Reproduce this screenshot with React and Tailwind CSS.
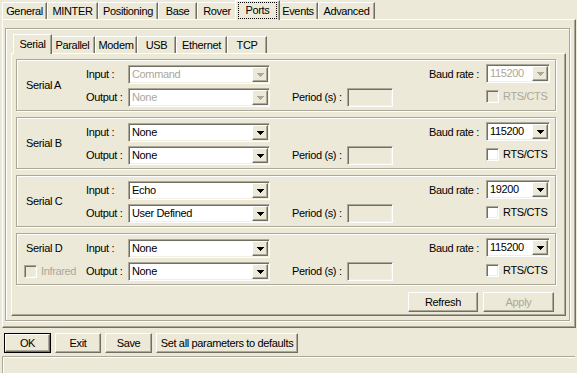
import React from "react";

// classic 3D edges
const raised =
  "bg-[#ECE9D8] border border-t-white border-l-white border-r-[#716F64] border-b-[#716F64] shadow-[inset_-1px_-1px_0_#ACA899]";
const sunken =
  "border border-t-[#ACA899] border-l-[#ACA899] border-r-white border-b-white shadow-[inset_1px_1px_0_#716F64,inset_-1px_-1px_0_#F1EFE2]";

const Arrow = ({ disabled }) => (
  <svg width="7" height="4" viewBox="0 0 7 4" shapeRendering="crispEdges">
    <path d="M0 0h7v1h-1v1h-1v1h-1v1h-1v-1h-1v-1h-1v-1h-1z" fill={disabled ? "#ACA899" : "#000"} />
  </svg>
);

const Combo = ({ value, className, disabled }) => (
  <div className={`h-[19px] flex p-[1px] bg-white ${sunken} ${className}`}>
    <div className={`flex-1 pl-[2px] leading-[15px] whitespace-nowrap overflow-hidden ${disabled ? "text-[#ACA899]" : "text-black"}`}>
      {value}
    </div>
    <div className={`w-[16px] h-[15px] flex items-center justify-center ${raised}`}>
      <Arrow disabled={disabled} />
    </div>
  </div>
);

const Check = ({ label, disabled }) => (
  <div className="flex items-center gap-[4px] h-[19px]">
    <div className={`w-[13px] h-[13px] ${sunken} ${disabled ? "bg-[#ECE9D8]" : "bg-white"}`} />
    <span className={disabled ? "text-[#ACA899]" : "text-black"}>{label}</span>
  </div>
);

const Button = ({ label, className, disabled }) => (
  <div className={`h-[20px] flex items-center justify-center ${raised} ${className} ${disabled ? "text-[#ACA899]" : "text-black"}`}>
    {label}
  </div>
);

const Tab = ({ label, className, selected, focus }) =>
  selected ? (
    <div
      className={`relative z-10 -mx-[2px] -mb-px h-[20px] bg-[#ECE9D8] border-t border-l border-r border-t-white border-l-white border-r-[#716F64] shadow-[inset_-1px_0_0_#ACA899] flex items-center justify-center ${className}`}
    >
      {focus && <div className="absolute inset-x-[2px] top-[1px] bottom-[1px] border border-dotted border-black" />}
      {label}
    </div>
  ) : (
    <div
      className={`h-[17px] border-t border-l border-r border-t-white border-l-white border-r-[#716F64] shadow-[inset_-1px_0_0_#ACA899] flex items-center justify-center ${className}`}
    >
      {label}
    </div>
  );

const Group = ({ name, input, output, baud, disabled, infrared }) => (
  <div className="w-[540px] h-[52px] border border-[#ACA899] shadow-[inset_1px_1px_0_#fff,1px_1px_0_#fff] flex pl-[9px] pt-[5px] pr-[5px]">
    {infrared ? (
      <div className="w-[60px] flex flex-col gap-[4px]">
        <div className="h-[19px] flex items-center">{name}</div>
        <div className="-ml-[2px]">
          <Check label="Infrared" disabled />
        </div>
      </div>
    ) : (
      <div className="w-[60px] h-[42px] flex items-center pb-[2px]">{name}</div>
    )}
    <div className="w-[42px] flex flex-col gap-[4px]">
      <div className="h-[19px] flex items-center">Input :</div>
      <div className="h-[19px] flex items-center">Output :</div>
    </div>
    <div className="w-[142px] flex flex-col gap-[4px]">
      <Combo value={input} disabled={disabled} />
      <Combo value={output} disabled={disabled} />
    </div>
    <div className="ml-[22px] flex flex-col gap-[4px]">
      <div className="h-[19px]" />
      <div className="h-[19px] flex items-center">
        <span className="w-[55px]">Period (s) :</span>
        <div className={`w-[46px] h-[19px] bg-[#ECE9D8] ${sunken}`} />
      </div>
    </div>
    <div className="ml-auto grid grid-cols-[auto_64px] gap-x-[7px] gap-y-[4px] items-center self-start">
      <span className="text-right">Baud rate :</span>
      <Combo value={baud} disabled={disabled} className="-mt-[1px]" />
      <span />
      <Check label="RTS/CTS" disabled={disabled} />
    </div>
  </div>
);

const topTabs = [
  ["General", "w-[45px]"],
  ["MINTER", "w-[51px]"],
  ["Positioning", "w-[60px]"],
  ["Base", "w-[39px]"],
  ["Rover", "w-[40px]"],
  ["Ports", "w-[45px]", true],
  ["Events", "w-[40px]"],
  ["Advanced", "w-[57px]"],
];

const innerTabs = [
  ["Serial", "w-[39px]", true],
  ["Parallel", "w-[45px]"],
  ["Modem", "w-[42px]"],
  ["USB", "w-[39px]"],
  ["Ethernet", "w-[51px]"],
  ["TCP", "w-[40px]"],
];

export default function App() {
  return (
    <div className="w-[577px] h-[373px] bg-[#ECE9D8] overflow-hidden text-[11px] tracking-[-0.35px] text-black font-['Liberation_Sans',Arial,sans-serif]">
      {/* top tab strip */}
      <div className="h-[19px] flex items-end pl-[2px]">
        {topTabs.map(([label, w, sel]) => (
          <Tab key={label} label={label} className={w} selected={sel} focus={sel} />
        ))}
      </div>

      {/* outer tab page */}
      <div className="ml-[2px] w-[574px] h-[309px] border-t border-l border-white border-r border-b border-r-[#716F64] border-b-[#716F64] shadow-[inset_-1px_-1px_0_#ACA899]">
        <div className="ml-[2px] mt-[8px] w-[565px] h-[293px] border border-[#ACA899] shadow-[inset_1px_1px_0_#fff,1px_1px_0_#fff]">
          <div className="mt-[5px] h-[19px] flex items-end pl-[9px]">
            {innerTabs.map(([label, w, sel]) => (
              <Tab key={label} label={label} className={w} selected={sel} />
            ))}
          </div>
          <div className="ml-[5px] w-[555px] h-[263px] border-t border-l border-white border-r border-b border-r-[#716F64] border-b-[#716F64] shadow-[inset_-1px_-1px_0_#ACA899] pl-[4px] pt-[5px]">
            <div className="flex flex-col gap-[6px]">
              <Group name="Serial A" input="Command" output="None" baud="115200" disabled />
              <Group name="Serial B" input="None" output="None" baud="115200" />
              <Group name="Serial C" input="Echo" output="User Defined" baud="19200" />
              <Group name="Serial D" input="None" output="None" baud="115200" infrared />
            </div>
            <div className="w-[540px] mt-[7px] flex justify-end gap-[5px] pr-[2px]">
              <Button label="Refresh" className="w-[70px]" />
              <Button label="Apply" className="w-[71px]" disabled />
            </div>
          </div>
        </div>
      </div>

      {/* dialog buttons */}
      <div className="mt-[5px] pl-[4px] flex gap-[4px]">
        <div className="w-[47px] h-[20px] border border-black flex">
          <div className={`flex-1 flex items-center justify-center ${raised}`}>OK</div>
        </div>
        <Button label="Exit" className="w-[46px]" />
        <Button label="Save" className="w-[47px]" />
        <Button label="Set all parameters to defaults" className="w-[142px]" />
      </div>

      {/* status bar */}
      <div className="mt-[3px] ml-[2px] w-[573px] h-[18px] border-t border-l border-[#ACA899] shadow-[inset_1px_1px_0_#fff]" />
    </div>
  );
}
